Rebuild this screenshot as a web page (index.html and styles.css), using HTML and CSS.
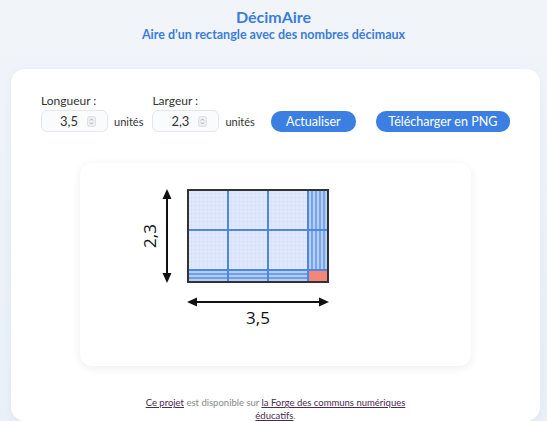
FILE: index.html
```html
<!DOCTYPE html>
<html lang="fr">
<head>
  <meta charset="UTF-8" />
  <meta name="viewport" content="width=device-width, initial-scale=1.0"/>
  <title>DécimAire</title>
  <link rel="stylesheet" href="styles.css">
</head>
<body>

<header class="top">
  <h1>DécimAire</h1>
  <h2>Aire d’un rectangle avec des nombres décimaux</h2>
</header>

<main class="panel">
  <div class="controls">
    <div class="field">
      <label for="longueur">Longueur :</label>
      <div class="field-row">
        <div class="num"><span>3,5</span>
          <svg class="spin" width="9" height="11" viewBox="0 0 9 11"><rect x="0.5" y="0.5" width="8" height="10" rx="2" fill="#eceef1" stroke="#dde0e5"/><path d="M3 4.5L4.5 3L6 4.5M3 6.5L4.5 8L6 6.5" fill="none" stroke="#9aa0a8" stroke-width="0.8"/></svg>
        </div>
        <span class="unit">unités</span>
      </div>
    </div>
    <div class="field">
      <label for="largeur">Largeur :</label>
      <div class="field-row">
        <div class="num"><span>2,3</span>
          <svg class="spin" width="9" height="11" viewBox="0 0 9 11"><rect x="0.5" y="0.5" width="8" height="10" rx="2" fill="#eceef1" stroke="#dde0e5"/><path d="M3 4.5L4.5 3L6 4.5M3 6.5L4.5 8L6 6.5" fill="none" stroke="#9aa0a8" stroke-width="0.8"/></svg>
        </div>
        <span class="unit">unités</span>
      </div>
    </div>
    <button class="btn btn-refresh">Actualiser</button>
    <button class="btn btn-png">Télécharger en PNG</button>
  </div>

  <div class="board">
    <svg width="391" height="203" viewBox="0 0 391 203">
      <defs>
        <pattern id="fine" width="4" height="4" patternUnits="userSpaceOnUse" x="108" y="27">
          <path d="M4 0V4M0 4H4" stroke="#c9d9f2" stroke-width="0.6" fill="none"/>
        </pattern>
      </defs>
      <!-- surface -->
      <rect x="108" y="27" width="140" height="92" fill="#dfe9fb"/>
      <rect x="108" y="27" width="140" height="92" fill="url(#fine)"/>
      <!-- bandes des dixièmes -->
      <rect x="228" y="27" width="20" height="92" fill="#b4cff6"/>
      <rect x="108" y="107" width="140" height="12" fill="#b4cff6"/>
      <rect x="228" y="107" width="20" height="12" fill="#f2867a"/>
      <g stroke="#5b8fe3" stroke-width="1.3">
        <path d="M232 27V107M236 27V107M240 27V107M244 27V107"/>
        <path d="M108 111H228M108 115H228"/>
      </g>
      <g stroke="#4f86e0" stroke-width="2">
        <path d="M148 27V119M188 27V119M228 27V119"/>
        <path d="M108 67H248M108 107H248"/>
      </g>
      <rect x="108" y="27" width="140" height="92" fill="none" stroke="#333" stroke-width="2"/>
      <!-- cotes -->
      <g stroke="#111" stroke-width="2">
        <path d="M87 34V112"/>
        <path d="M115 139H241"/>
      </g>
      <g fill="#111">
        <path d="M87 26L82.5 36H91.5Z"/>
        <path d="M87 120L82.5 110H91.5Z"/>
        <path d="M107 139L117 134.5V143.5Z"/>
        <path d="M249 139L239 134.5V143.5Z"/>
      </g>
      <text class="dim" x="178" y="161" text-anchor="middle">3,5</text>
      <text class="dim" x="0" y="0" text-anchor="middle" transform="translate(76 73) rotate(-90)">2,3</text>
    </svg>
  </div>

  <footer class="credits">
    <a href="#">Ce projet</a> est disponible sur <a href="#">la Forge des communs numériques éducatifs</a>.
  </footer>
</main>

</body>
</html>
```

FILE: styles.css
```css
* { box-sizing: border-box; margin: 0; padding: 0; }

body, html {
  font-family: 'Lato', 'Open Sans', sans-serif;
  background: linear-gradient(180deg, #f1f5fa 0%, #eaf0f8 100%);
  color: #333;
  height: 100%;
  overflow: hidden;
}

.top {
  text-align: center;
  padding-top: 7px;
  color: #3b7dd8;
}

.top h1 {
  font-size: 16px;
  font-weight: 700;
  line-height: 20px;
}

.top h2 {
  font-size: 12.5px;
  font-weight: 700;
  line-height: 15px;
}

.panel {
  margin: 27px 7px 0 11px;
  background: #fff;
  border-radius: 14px;
  box-shadow: 0 2px 10px rgba(40, 70, 120, 0.06);
  padding: 25px 30px 0;
  height: 352px;
}

.controls {
  display: flex;
  align-items: flex-end;
}

.field label {
  display: block;
  font-size: 12px;
  line-height: 14px;
  margin-bottom: 2px;
}

.field-row {
  display: flex;
  align-items: center;
}

.num {
  width: 67px;
  height: 22px;
  border: 1px solid #e4e7ec;
  border-radius: 6px;
  background: #fafbfc;
  display: flex;
  align-items: center;
  justify-content: flex-end;
  padding-right: 11px;
  font-size: 13px;
}

.num span { margin-right: 9px; }

.spin { display: block; }

.unit {
  font-size: 11px;
  margin: 0 9px 0 6px;
}

.btn {
  font-family: inherit;
  border: none;
  color: #fff;
  background: #3b7fe3;
  border-radius: 10px;
  height: 21px;
  font-size: 12.5px;
  padding: 0;
  white-space: nowrap;
  cursor: pointer;
  margin-bottom: 0.5px;
}

.btn-refresh { width: 85px; margin-left: 7px; }
.btn-png { width: 134px; margin-left: 20px; }

.board {
  width: 391px;
  height: 203px;
  margin: 31px auto 0;
  background: #fff;
  border-radius: 12px;
  box-shadow: 0 2px 10px rgba(0, 0, 0, 0.07);
}

.board svg { display: block; }

.dim {
  font-family: 'Open Sans', sans-serif;
  font-size: 17px;
  fill: #111;
}

.credits {
  width: 264px;
  margin: 30px auto 0;
  text-align: center;
  font-size: 9.5px;
  line-height: 13px;
  color: #888;
}

.credits a { color: #4b2b4f; }
```
